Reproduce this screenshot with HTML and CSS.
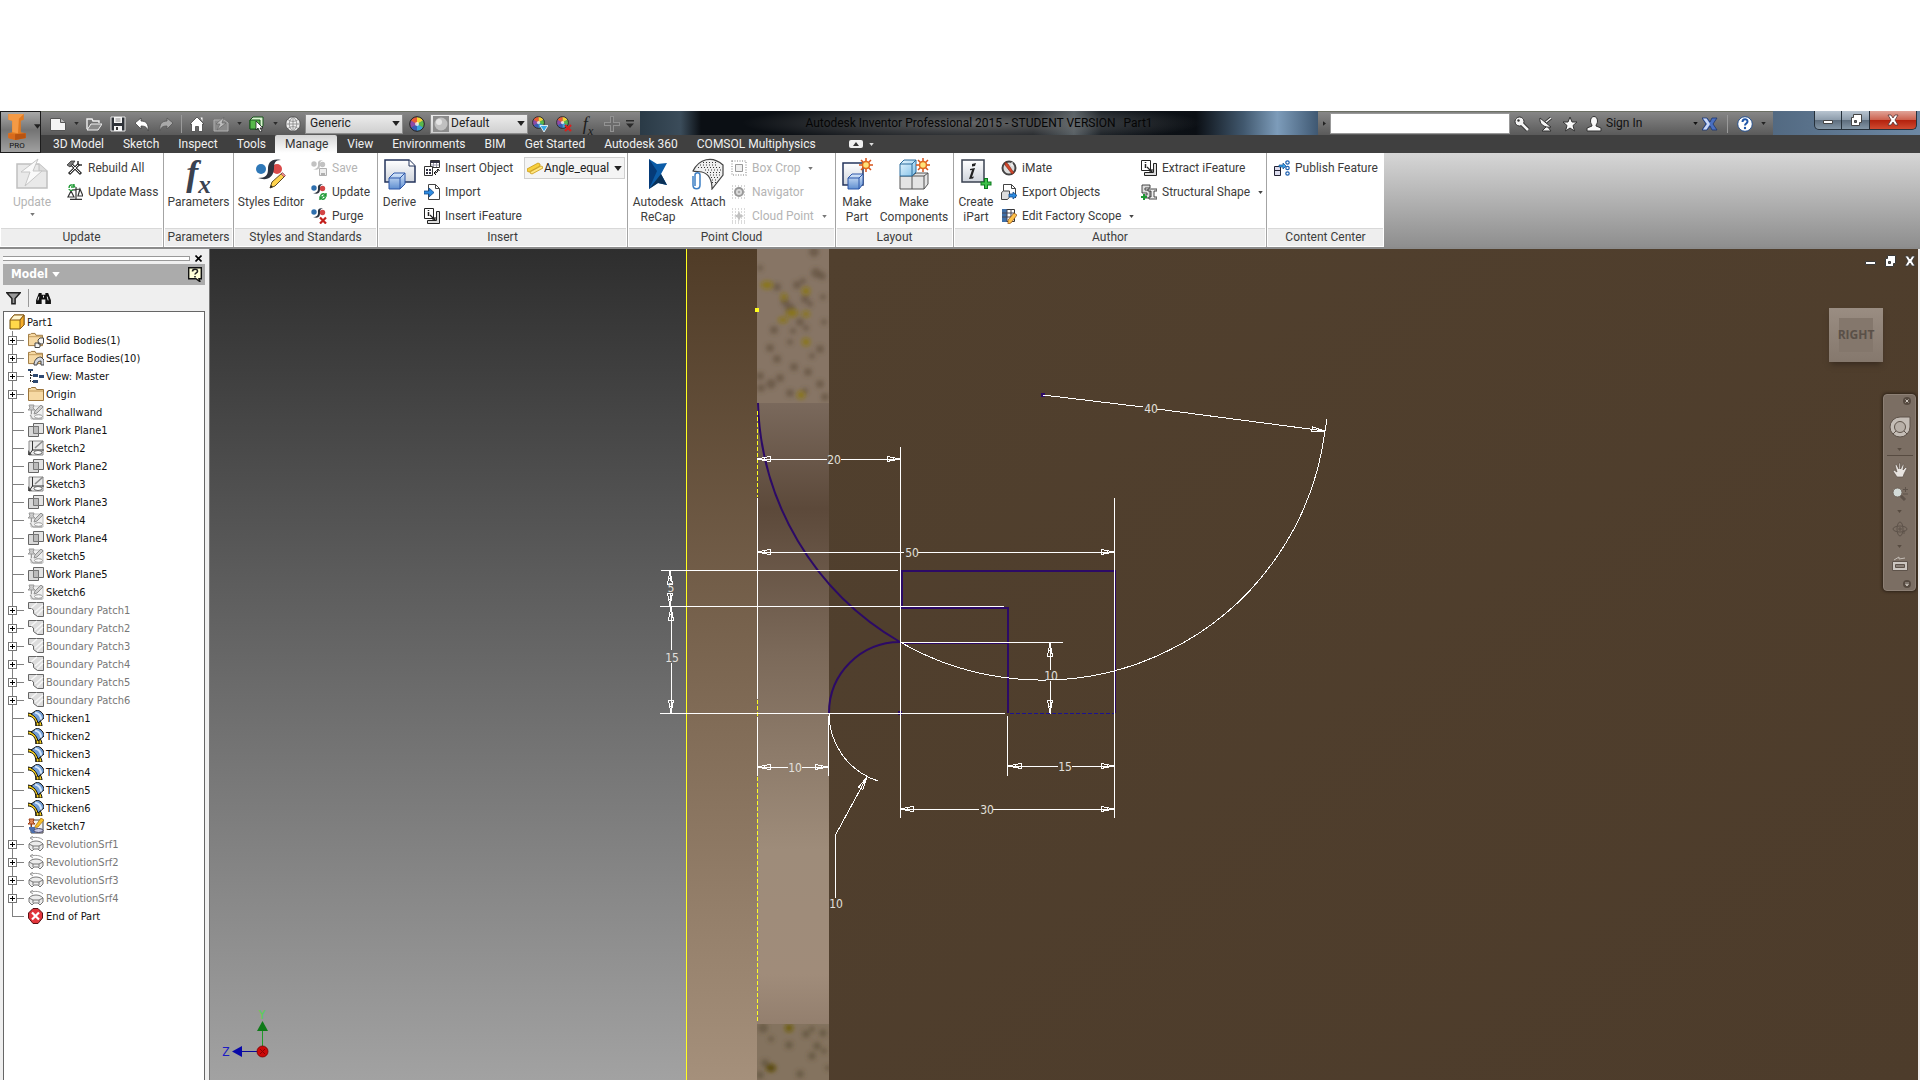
FILE: index.html
```html
<!DOCTYPE html>
<html lang="en">
<head>
<meta charset="utf-8">
<title>Autodesk Inventor Professional 2015 - STUDENT VERSION - Part1</title>
<link rel="stylesheet" href="styles.css">
</head>
<body>
<svg class="defs" aria-hidden="true">
  <defs>
    <linearGradient id="gBlue" x1="0" y1="0" x2="0" y2="1"><stop offset="0" stop-color="#d8e8fb"/><stop offset="1" stop-color="#5f8ed0"/></linearGradient>
    <linearGradient id="gPage" x1="0" y1="0" x2="0" y2="1"><stop offset="0" stop-color="#fff"/><stop offset="1" stop-color="#cfd4dc"/></linearGradient>
    <linearGradient id="gSky" x1="0" y1="0" x2="1" y2="1"><stop offset="0" stop-color="#eaf7ff"/><stop offset="1" stop-color="#7fc0e8"/></linearGradient>
    <symbol id="i-caret" viewBox="0 0 6 4"><path d="M0 0h6L3 4z" fill="currentColor"/></symbol>
    <symbol id="i-custom" viewBox="0 0 8 8"><path d="M0 0h8v1.500H0zM0 3.500h8L4 8z" fill="currentColor"/></symbol>
    <symbol id="i-new" viewBox="0 0 16 16"><path d="M.5 2.500h10l5 4v8H.5z" fill="#f4f4f4" stroke="#555"/><path d="M10.500 2.500v4h5" fill="#bbb" stroke="#555"/></symbol>
    <symbol id="i-open" viewBox="0 0 16 16"><path d="M1 13V3h5l1 2h6v2" fill="none" stroke="#f0f0f0" stroke-width="1.400"/><path d="M1 14l4-6h11l-4 6z" fill="#8a8a8a" stroke="#f0f0f0"/></symbol>
    <symbol id="i-save" viewBox="0 0 16 16"><path d="M1 1h14v14H1z" fill="#2e3238" stroke="#e8e8e8"/><path d="M4 1h8v6H4zM4 10h8v5H4z" fill="#f5f5f5"/><path d="M5.500 3h5M5.500 5h5" stroke="#888"/><path d="M6 11h2v3H6z" fill="#333"/></symbol>
    <symbol id="i-undo" viewBox="0 0 16 16"><path d="M1 7l6-5v3c5 0 8 3 7 10-1-4-3-5-7-5v3z" fill="#fff" stroke="#444" stroke-width=".8"/></symbol>
    <symbol id="i-redo" viewBox="0 0 16 16"><path d="M15 7L9 2v3C4 5 1 8 2 15c1-4 3-5 7-5v3z" fill="#a9a9a9" stroke="#555" stroke-width=".8"/></symbol>
    <symbol id="i-home" viewBox="0 0 16 16"><path d="M8 1l7 7h-1.500v7.500h-4v-5h-3v5h-4V8H1z" fill="#fff" stroke="#444" stroke-width=".8"/><path d="M11.500 1.500h2v4z" fill="#fff"/></symbol>
    <symbol id="i-updsm" viewBox="0 0 16 16"><path d="M1 4h10l4 3v8H1z" fill="#8a8a8a" stroke="#b0b0b0"/><path d="M11 1L3 8h4l-3 6 9-7H9z" fill="#bdbdbd" stroke="#666" stroke-width=".7"/></symbol>
    <symbol id="i-select" viewBox="0 0 16 16"><path d="M1 4l3-3h10v9l-3 3H1z" fill="#d9f5d0" stroke="#17551a"/><path d="M1 4h10v9H1z" fill="#57b94a" stroke="#17551a"/><path d="M7 5v9l2-2 2 4 2-1-2-3h3z" fill="#fff" stroke="#222" stroke-width=".8"/></symbol>
    <symbol id="i-globe" viewBox="0 0 16 16"><circle cx="8" cy="8" r="7.300" fill="#eee" stroke="#555"/><path d="M8 1v14M1 8h14M3 3.500c3 2.500 7 2.500 10 0M3 12.500c3-2.500 7-2.500 10 0M8 1C3 5 3 11 8 15M8 1c5 4 5 10 0 14" fill="none" stroke="#8c8c8c" stroke-width=".9"/></symbol>
    <symbol id="i-wheel" viewBox="0 0 16 16"><path d="M8 8V1a7 7 0 0 1 6.100 3.500z" fill="#f3d437"/><path d="M8 8l6.100-3.500a7 7 0 0 1 0 7z" fill="#59b84c"/><path d="M8 8l6.100 3.500A7 7 0 0 1 8 15z" fill="#3aa3d8"/><path d="M8 8v7a7 7 0 0 1-6.100-3.500z" fill="#3b5bb5"/><path d="M8 8l-6.100 3.500a7 7 0 0 1 0-7z" fill="#8e4aa6"/><path d="M8 8L1.900 4.500A7 7 0 0 1 8 1z" fill="#ea5a35"/><circle cx="8" cy="8" r="7.300" fill="none" stroke="#222"/><circle cx="8" cy="8" r="2" fill="#fff" opacity=".75"/></symbol>
    <symbol id="i-wheeldn" viewBox="0 0 16 16"><use href="#i-wheel" width="13" height="13"/><path d="M8 9.500h8L12 16z" fill="#39a9e8" stroke="#fff" stroke-width=".8"/></symbol>
    <symbol id="i-wheelx" viewBox="0 0 16 16"><use href="#i-wheel" width="13" height="13"/><path d="M9 9l6 6M15 9l-6 6" stroke="#d8201c" stroke-width="2.200"/></symbol>
    <symbol id="i-ball" viewBox="0 0 16 16"><path d="M0 0h16v16H0z" fill="#8c8c8c"/><circle cx="8" cy="8" r="6.500" fill="#c0c0c0"/><circle cx="6" cy="6" r="3" fill="#e4e4e4"/></symbol>
    <symbol id="i-plus" viewBox="0 0 16 16"><path d="M8 0v16M0 8h16" stroke="#929292" stroke-width="4"/><path d="M8 1v14M1 8h14" stroke="#6c6c6c" stroke-width="2"/></symbol>
    <symbol id="i-key" viewBox="0 0 16 16"><path d="M8 8l6 6" stroke="#333" stroke-width="4.500"/><circle cx="5.500" cy="5.500" r="4.500" fill="#f4f4f4" stroke="#333"/><path d="M7 7l7 7" stroke="#f4f4f4" stroke-width="2.600"/><circle cx="4.500" cy="4.500" r="1.200" fill="#333"/></symbol>
    <symbol id="i-dish" viewBox="0 0 16 16"><path d="M4 15h9l-4-5z" fill="#f4f4f4" stroke="#333"/><path d="M2 2c-1 6 4 10 11 9z" fill="#f4f4f4" stroke="#333"/><path d="M8 6l5-4" stroke="#333" stroke-width="3"/><path d="M8 6l5-4" stroke="#f4f4f4" stroke-width="1.500"/></symbol>
    <symbol id="i-star" viewBox="0 0 16 16"><path d="M8 1l2 5h5l-4 3.500 1.500 5.500L8 12l-4.500 3L5 9.500 1 6h5z" fill="#f8f8f8" stroke="#333"/></symbol>
    <symbol id="i-user" viewBox="0 0 16 16"><path d="M4.500 5c0-6 7-6 7 0 0 3-1.500 3-1.500 5l5 2v3H1v-3l5-2c0-2-1.500-2-1.500-5z" fill="#f8f8f8" stroke="#333"/></symbol>
    <symbol id="i-xchg" viewBox="0 0 16 16"><path d="M0 2h5l3 4 2-4h5l-4 6 4 6h-5l-2-4-3 4H0l4-6z" fill="#4a6fc0" stroke="#1c3670" stroke-width=".8"/><path d="M1 2.500h3.500L8 8l-3.500 5.500H1L5 8z" fill="#c9d8f6"/></symbol>
    <symbol id="i-help" viewBox="0 0 16 16"><circle cx="8" cy="8" r="7.300" fill="#fff" stroke="#27518e"/><path d="M5.500 6c0-3.500 5-3.500 5-.5 0 2-2.500 2-2.500 4" fill="none" stroke="#1f56a8" stroke-width="2"/><circle cx="8" cy="12" r="1.200" fill="#1f56a8"/></symbol>

    <symbol id="b-update" viewBox="0 0 32 32"><path d="M1 6h22l8 7v17H1z" fill="#e9e9e9" stroke="#c0c0c0" stroke-width="1.500"/><path d="M23 6v7h8" fill="#ddd" stroke="#c0c0c0"/><path d="M22 1L5 14h9L9 28l17-15h-9z" fill="#fafafa" stroke="#c6c6c6"/></symbol>
    <symbol id="b-styles" viewBox="0 0 32 32"><circle cx="6" cy="11" r="5" fill="#2f78b8"/><circle cx="22" cy="11" r="5" fill="#d94a4a"/><path d="M26 2C16 0 13 5 13 11c0 6-2 9-10 9 9 3 15 0 16-9 0-6 1-9 7-9z" fill="#2d3440"/><path d="M15 30l2-6 10-9 3 3-10 10z" fill="#ffd34d" stroke="#5d4a22"/><path d="M15 30l1-3 2 2z" fill="#222"/><path d="M26 16l3 3 1.500-1.500-3-3z" fill="#e88" stroke="#633" stroke-width=".5"/></symbol>
    <symbol id="b-derive" viewBox="0 0 32 32"><path d="M1 2h24l6 6v16H1z" fill="url(#gPage)" stroke="#24355c" stroke-width="1.500"/><path d="M25 2v6h6" fill="#fff" stroke="#24355c"/><path d="M5 20l5-5h11v11l-5 5H5z" fill="url(#gBlue)" stroke="#2c56a8"/><path d="M5 20h11v11M16 20l5-5" fill="none" stroke="#2c56a8"/></symbol>
    <symbol id="b-recap" viewBox="0 0 32 32"><path d="M7 1l8 5 10-1-6 11 6 11-9-2-9 6z" fill="#0b5ca8"/><path d="M7 1l8 12-8 18z" fill="#053a78"/><path d="M7 31l12-15 6 11-9-2z" fill="#0a3158"/></symbol>
    <symbol id="b-attach" viewBox="0 0 32 32"><path d="M1 13C7 1 20-3 31 7v10L20 31c0-9-3-15-10-17-3-1-7 0-9-1z" fill="#f0f0f0" stroke="#444" stroke-width="1.200"/><path d="M8 7h18M6 9.500h22M13 12h16M15 14.500h14M18 17h11M19 19.500h9M20 22h6M20 24.500h4M11 4.500h13" stroke="#333" stroke-dasharray="1 2"/><path d="M3 28V17c0-3 5-3 5 0v10c0 5-7 5-7 0V18" fill="none" stroke="#3d7fc4" stroke-width="1.500"/></symbol>
    <symbol id="s-burst" viewBox="0 0 14 14"><path d="M7 0v14M0 7h14M2 2l10 10M12 2L2 12" stroke="#d8541c" stroke-width="1.500"/><circle cx="7" cy="7" r="3.500" fill="#ffe27a" stroke="#e06a1c" stroke-width="1.500"/></symbol>
    <symbol id="b-part" viewBox="0 0 32 32"><path d="M2 5h20v22H2z" fill="url(#gPage)" stroke="#24355c" stroke-width="1.500"/><path d="M7 20l4-4h11v10l-4 5H7z" fill="url(#gBlue)" stroke="#2c56a8"/><path d="M7 20h11v11M18 20l4-4" fill="none" stroke="#2c56a8"/><use href="#s-burst" x="18" y="0" width="14" height="14"/></symbol>
    <symbol id="b-comp" viewBox="0 0 32 32"><path d="M2 18l4-3h24v11l-4 5H2z" fill="#e4e4e4" stroke="#555"/><path d="M2 18h24v13M14 18v13M26 18l4-3M14 18l4-3" fill="none" stroke="#555"/><path d="M2 6l4-4h12v12l-4 4H2z" fill="url(#gSky)" stroke="#2c6d9c"/><path d="M2 6h12v12M14 6l4-4" fill="none" stroke="#2c6d9c"/><use href="#s-burst" x="18" y="0" width="14" height="14"/></symbol>
    <symbol id="b-ipart" viewBox="0 0 32 32"><path d="M2 2h22v22H2z" fill="url(#gPage)" stroke="#3a4150" stroke-width="1.500"/><path d="M12 6l4-1-1 3-3 .5zM10 11l5-1-3 9 2-.5-1 2-4 .5 3-9-2 .3z" fill="#222"/><path d="M26 20v11M20.500 25.500h11" stroke="#0c7a1e" stroke-width="4"/><path d="M26 21v9M21.500 25.500h9" stroke="#3fc14a" stroke-width="2"/></symbol>

    <symbol id="m-rebuild" viewBox="0 0 16 16"><path d="M3 3l11 11M12 4L2 14" stroke="#333" stroke-width="3"/><path d="M4 4l9 9M11 5L3 13" stroke="#f2f2f2"/><path d="M0 5l4-4h4L5 5 3 7z" fill="#777" stroke="#222" stroke-width=".7"/><path d="M11 1v3l1 1h3" fill="none" stroke="#333" stroke-width="1.500"/></symbol>
    <symbol id="m-mass" viewBox="0 0 16 16"><path d="M9 3v12M3 15.300h12M5 6l8-1M4 7l-3 6h6zM13 5l-2 7h5z" fill="none" stroke="#333" stroke-width="1.200"/><path d="M2 4c0-4 5-4 6-1M7 0v3H4M6 6C4 7 2 6 2 5" fill="none" stroke="#1f9a35" stroke-width="1.300"/></symbol>
    <symbol id="s-style" viewBox="0 0 16 16"><circle cx="3" cy="4" r="2.700" fill="#2f6fae"/><circle cx="11.500" cy="4.500" r="2.700" fill="#d34545"/><path d="M12 0C6 0 7 3 7 5s-1 4-5 4c6 2 7-1 7-4 0-2 0-4 3-5z" fill="#2d3440"/></symbol>
    <symbol id="m-ssave" viewBox="0 0 16 16"><g fill="#c2c2c2"><circle cx="3" cy="4" r="2.700"/><circle cx="11.500" cy="4.500" r="2.700"/><path d="M12 0C6 0 7 3 7 5s-1 4-5 4c6 2 7-1 7-4 0-2 0-4 3-5z"/></g><path d="M8.500 8.500h7v7h-7z" fill="#eee" stroke="#b0b0b0"/><path d="M10 13h4v2h-4z" fill="#b0b0b0"/></symbol>
    <symbol id="m-supd" viewBox="0 0 16 16"><use href="#s-style" width="16" height="16"/><path d="M15 9v3h-3M9 16v-3h3M9.500 12c1-3 4-3 5-.5M14.500 13c-1 3-4 3-5 .5" fill="none" stroke="#1f9a35" stroke-width="1.400"/></symbol>
    <symbol id="m-spurge" viewBox="0 0 16 16"><use href="#s-style" width="16" height="16"/><path d="M9 9.500l6 6M15 9.500l-6 6" stroke="#c3201c" stroke-width="2.200"/></symbol>
    <symbol id="m-iobj" viewBox="0 0 16 16"><path d="M6.500.5h9v7h-9z" fill="#fff" stroke="#333"/><path d="M6 2h10" stroke="#334" stroke-width="2"/><path d="M9.500 3v4M12.500 3v4M7 5h8" stroke="#99a"/><path d="M.5 6.500h8v9h-8z" fill="#fff" stroke="#333"/><path d="M2 9h2v2H2zM5 9h2v2H5zM2 12h2v2H2zM5 12h2v2H5z" fill="#334"/><path d="M14 9c0 3-1 4-4 4M12 11l-2 2 2 2M12.500 11L14 9l1.500 2" fill="none" stroke="#111"/></symbol>
    <symbol id="m-import" viewBox="0 0 16 16"><path d="M4.500.5h7l4 4v11h-11z" fill="#fff" stroke="#444"/><path d="M11.500.5v4h4" fill="none" stroke="#444"/><path d="M0 7h5V4l5 4.500L5 13v-3H0z" fill="#2d8be0" stroke="#124a8c" stroke-width=".8"/></symbol>
    <symbol id="m-ifeat" viewBox="0 0 16 16"><path d="M12.500 3.500h3v12h-12v-3h9z" fill="#ddd" stroke="#222"/><path d="M.5.500h9v10h-9z" fill="#fff" stroke="#222"/><path d="M4.500 4v4M4.500 2v1" stroke="#222" stroke-width="1.500"/><path d="M6 7l5 5M11 9v3H8" fill="none" stroke="#222" stroke-width="1.200"/></symbol>
    <symbol id="m-angle" viewBox="0 0 16 16"><path d="M0 9L11 3l2 1v2L2 12l-2-1z" fill="#f7cf3d" stroke="#c99812" stroke-width=".8"/><path d="M3 12l11-6 2 1v1L5 14l-2-1z" fill="#ffe680" stroke="#c99812" stroke-width=".8"/></symbol>
    <symbol id="m-crop" viewBox="0 0 16 16"><path d="M1 1h14v14H1z" fill="none" stroke="#aaa" stroke-dasharray="1 1.500" stroke-width="1.500"/><path d="M4.500 4.500h7v7h-7z" fill="#f0f0f0" stroke="#999"/></symbol>
    <symbol id="m-navi" viewBox="0 0 16 16"><path d="M1 2h14M1 5h14M1 8h14M1 11h14M1 14h14" stroke="#aaa" stroke-dasharray="1 2"/><circle cx="8" cy="8" r="4" fill="#ddd" stroke="#999" stroke-width="2"/><circle cx="8" cy="8" r="1.300" fill="#aaa"/></symbol>
    <symbol id="m-cloud" viewBox="0 0 16 16"><path d="M1 1h14M1 4h14M1 7h14M1 10h14M1 13h14M1 15h14" stroke="#b5b5b5" stroke-dasharray="1 2"/><path d="M8 3l1.500 3.500L13 8 9.500 9.500 8 13 6.500 9.500 3 8l3.500-1.500z" fill="#c2c2c2"/></symbol>
    <symbol id="m-imate" viewBox="0 0 16 16"><circle cx="8" cy="8" r="6.500" fill="#ddd" stroke="#444" stroke-width="2"/><path d="M4 2l3 2 6 9-2 1-7-9z" fill="#d4472a" stroke="#7a2010" stroke-width=".6"/><path d="M11 2v4" stroke="#fff"/></symbol>
    <symbol id="m-export" viewBox="0 0 16 16"><path d="M2.500 7V.500h8l4 4V14" fill="#fff" stroke="#444"/><path d="M10.500.5v4h4" fill="none" stroke="#444"/><path d="M.5 8.500l2-1.500h6v6l-2 2.500h-6z" fill="#ddd" stroke="#444"/><path d="M8 10h4V8l4 3.500-4 3.500v-2H8z" fill="#2d8be0" stroke="#124a8c" stroke-width=".8"/></symbol>
    <symbol id="m-scope" viewBox="0 0 16 16"><path d="M1.500 1.500h12v12h-12z" fill="#fff" stroke="#333"/><path d="M1 1h5v13H1z" fill="#3e6fa8"/><path d="M1 5h12M1 9h12M6 1v13M10 1v12" stroke="#445"/><path d="M7 12l6-7 3 2-6 8-3 1z" fill="#ffc24a" stroke="#8a4a12" stroke-width=".7"/></symbol>
    <symbol id="m-struct" viewBox="0 0 16 16"><path d="M1 1h8v3H4v2h5v8H3v-3h3V9H1z" fill="#ddd" stroke="#333" stroke-width=".9"/><path d="M7 5h9v2h-3v6h3v2H8v-2h2V7H7z" fill="#eee" stroke="#333" stroke-width=".9"/><path d="M3 10v6M0 13h6" stroke="#1f9a35" stroke-width="2"/></symbol>
    <symbol id="m-publish" viewBox="0 0 16 16"><path d="M.5 6.500h6v9h-6zM.5 10.500h6" fill="#dde" stroke="#223"/><path d="M5 5h4V3l3 3-3 3V7H5z" fill="#3aa0e6" stroke="#124a8c" stroke-width=".7"/><g fill="#fff" stroke="#1b5fb0" stroke-width="1.200"><circle cx="13.500" cy="2.500" r="1.700"/><circle cx="13.500" cy="8" r="1.700"/><circle cx="13.500" cy="13.500" r="1.700"/></g></symbol>

    <symbol id="t-part" viewBox="0 0 16 16"><path d="M1 6l4-5h10v10l-4 4H1z" fill="#ffd84a" stroke="#6b4a08"/><path d="M1 6l4-5h10l-4 5z" fill="#fff6cf" stroke="#8a5a14"/><path d="M11 6v9l4-4V1z" fill="#f5ae2a" stroke="#8a5a14"/></symbol>
    <symbol id="t-folder" viewBox="0 0 16 16"><path d="M.5 14.500v-12h2l1-1h4l1 2h7v11z" fill="#f6d9a4" stroke="#9a733a"/><path d="M1 5h14" stroke="#c29a5a"/></symbol>
    <symbol id="t-solid" viewBox="0 0 16 16"><use href="#t-folder" width="15" height="15"/><path d="M10 8l2-2h3.500v5l-1 1h-4zM7 11h5v4l-1 .5H7z" fill="#f4f4f4" stroke="#444"/></symbol>
    <symbol id="t-surf" viewBox="0 0 16 16"><use href="#t-folder" width="15" height="15"/><path d="M6 15c0-5 3-8 7-8l3 3v5h-3v-4c-3 0-4 2-4 4z" fill="#d4d8e0" stroke="#444"/></symbol>
    <symbol id="t-view" viewBox="0 0 16 16"><path d="M2.500 3v10.500H6M2.500 7.500H5" fill="none" stroke="#222" stroke-dasharray="2 1"/><path d="M0 1h5v2H0zM5 6h5v3H5zM11 7h5v3h-5zM5 12h5v3H5z" fill="#2f4a72"/></symbol>
    <symbol id="t-plane" viewBox="0 0 16 16"><path d="M5.500 1.500h10v10h-10z" fill="#e4e4e4" stroke="#666"/><path d="M.5 4.500h10v10H.5z" fill="#d0d0d0" fill-opacity=".8" stroke="#666"/><path d="M5.500 4.500h5v7h-5z" fill="#bbb" stroke="#777"/></symbol>
    <symbol id="t-sketch" viewBox="0 0 16 16"><path d="M1 1h14v14H1z" fill="#eaeaea" stroke="#8a8a8a"/><path d="M0 10l4 5H0z" fill="#555"/><path d="M4.500 1v9L1 15M4 10h12" fill="none" stroke="#333"/><path d="M15 1L7 8" stroke="#888" stroke-width="1.500"/><ellipse cx="10" cy="12.500" rx="4" ry="2" fill="#fff" stroke="#666"/></symbol>
    <symbol id="t-gsketch" viewBox="0 0 16 16"><path d="M3 2h12v13H3z" fill="#eee" stroke="#c0c0c0"/><path d="M1 1h5L5 4l2 2H0l2-2zM3.500 6v4" fill="#ccc" stroke="#999"/><path d="M13 1l2 2-6 6-3 1 1-3z" fill="#d0d0d0" stroke="#909090"/><path d="M2 11l3 4h9" fill="none" stroke="#999"/><ellipse cx="10.500" cy="12.500" rx="4" ry="1.800" fill="#fafafa" stroke="#999"/></symbol>
    <symbol id="t-csketch" viewBox="0 0 16 16"><path d="M3 2h12v13H3z" fill="#f2f2f2" stroke="#444"/><path d="M1 1h5L5 4l2 2H0l2-2zM3.500 6v4" fill="#e08a5a" stroke="#9a3a14"/><path d="M13 0l3 2-6 7-4 1 2-3z" fill="#f6c02a" stroke="#a06a10" stroke-width=".7"/><path d="M1 11l3 4h3V9H1z" fill="#4a6fae"/><ellipse cx="10.500" cy="12.500" rx="4.500" ry="2" fill="#c8cbe6" stroke="#446"/></symbol>
    <symbol id="t-patch" viewBox="0 0 16 16"><path d="M.5.500h15v14h-6l-4-3V8l-2-1.500h-3z" fill="#dcdcdc" stroke="#666"/><path d="M3 6l6-5M7 10l8-7M9 13l6-6" stroke="#f6f6f6" stroke-width="1.500"/></symbol>
    <symbol id="t-thick" viewBox="0 0 16 16"><path d="M0 6c5 0 8 4 8 10h6C14 11 8 4 0 3z" fill="#f7d01c" stroke="#111"/><path d="M8 12v4M11 11v5" stroke="#111"/><path d="M3 4l6-4c4 1 7 4 7 8l-6 5C9 9 7 6 3 4z" fill="#6f9cd6" stroke="#111"/><path d="M7 2.500c4 1 6 4 6 7" fill="none" stroke="#d6e6fa" stroke-width="2"/></symbol>
    <symbol id="t-rev" viewBox="0 0 16 16"><path d="M1 8c3-4 11-4 14 0v4l-3 3-2-2H6l-2 2-3-3z" fill="#ececec" stroke="#777"/><path d="M1 8l4 2h6l4-2M5 10v3M11 10v3" fill="none" stroke="#777"/><path d="M15 4c-3-3-8-3-12-2M5 0L2 2l3 2" fill="none" stroke="#999"/></symbol>
    <symbol id="t-end" viewBox="0 0 16 16"><path d="M5 .5h5l4.500 4.500v5L10 15.500H5L.5 10V5z" fill="#e2343a" stroke="#5a1014"/><path d="M4 4.500l7 7M11 4.500l-7 7" stroke="#fff" stroke-width="2.200"/></symbol>
  </defs>
</svg>

<header class="chrome">
  <button class="app-menu" aria-label="Application menu">
    <svg class="app-logo" viewBox="0 0 20 28"><path d="M1 1h16v6l-3 1v12l5 1v5L8 28l-7-2v-5l4-1V8L1 7z" fill="#e07a22"/><path d="M1 1h16l-5 5-1 15-6-1V8L1 7z" fill="#f59a45"/><path d="M1 21l7 1 11-1v5L8 28l-7-2z" fill="#d86a1c"/><path d="M8 22l11-1v5L8 28z" fill="#b85412"/></svg>
    <svg class="caret caret-lg"><use href="#i-caret"/></svg>
    <span class="app-pro">PRO</span>
  </button>

  <div class="titlebar">
    <div class="qat">
      <button aria-label="New"><svg><use href="#i-new"/></svg></button><button class="drop" aria-label="New options"><svg class="caret"><use href="#i-caret"/></svg></button>
      <button aria-label="Open"><svg><use href="#i-open"/></svg></button>
      <button aria-label="Save"><svg><use href="#i-save"/></svg></button>
      <button aria-label="Undo"><svg><use href="#i-undo"/></svg></button>
      <button aria-label="Redo"><svg><use href="#i-redo"/></svg></button>
      <span class="bar-sep"></span>
      <button aria-label="Home"><svg><use href="#i-home"/></svg></button>
      <button aria-label="Update"><svg><use href="#i-updsm"/></svg></button><button class="drop" aria-label="Update options"><svg class="caret"><use href="#i-caret"/></svg></button>
      <button aria-label="Select"><svg><use href="#i-select"/></svg></button><button class="drop" aria-label="Select options"><svg class="caret"><use href="#i-caret"/></svg></button>
      <button aria-label="Material"><svg><use href="#i-globe"/></svg></button>
      <span class="combo"><select aria-label="Material"><option>Generic</option></select><svg class="caret caret-lg"><use href="#i-caret"/></svg></span>
      <button class="wide" aria-label="Appearance"><svg><use href="#i-wheel"/></svg></button>
      <span class="combo"><svg><use href="#i-ball"/></svg><select aria-label="Appearance"><option>Default</option></select><svg class="caret caret-lg"><use href="#i-caret"/></svg></span>
      <button aria-label="Adjust"><svg><use href="#i-wheeldn"/></svg></button>
      <button aria-label="Clear"><svg><use href="#i-wheelx"/></svg></button>
      <button class="fx-sm" aria-label="Parameters"><i>f<sub>x</sub></i></button>
      <button aria-label="Add"><svg><use href="#i-plus"/></svg></button>
      <button class="drop" aria-label="Customize"><svg class="custom"><use href="#i-custom"/></svg></button>
    </div>
    <h1 class="title"><span>Autodesk Inventor Professional 2015 - STUDENT VERSION</span><span>Part1</span></h1>
    <div class="infocenter">
      <button class="drop" aria-label="Collapse search"><svg class="caret turn"><use href="#i-caret"/></svg></button>
      <input type="text" aria-label="Search">
      <button aria-label="Search key"><svg><use href="#i-key"/></svg></button>
      <button aria-label="Communication"><svg><use href="#i-dish"/></svg></button>
      <button aria-label="Favorites"><svg><use href="#i-star"/></svg></button>
      <button class="signin"><svg><use href="#i-user"/></svg>Sign In<svg class="caret"><use href="#i-caret"/></svg></button>
      <button aria-label="Exchange"><svg><use href="#i-xchg"/></svg></button>
      <span class="bar-sep"></span>
      <button aria-label="Help"><svg><use href="#i-help"/></svg></button>
      <button class="drop" aria-label="Help options"><svg class="caret"><use href="#i-caret"/></svg></button>
    </div>
    <div class="winctl">
      <button aria-label="Minimize"><svg viewBox="0 0 12 12"><path d="M1.500 6.500h9v3h-9z" fill="#fff" stroke="#444"/></svg></button>
      <button aria-label="Restore"><svg viewBox="0 0 12 12"><path d="M3.500.5h8v8h-2v3h-8v-8h2z" fill="#fff" stroke="#444"/><path d="M4.500 6.500h2v2h-2z" fill="#666" stroke="#444"/></svg></button>
      <button class="close" aria-label="Close"><svg viewBox="0 0 12 12"><path d="M1 1h3l2 3 2-3h3L8 6l3 5H8L6 8l-2 3H1l3-5z" fill="#fff" stroke="#533" stroke-width=".8"/></svg></button>
    </div>
  </div>

  <nav class="tabs">
    <a href="#model">3D Model</a><a href="#sketch">Sketch</a><a href="#inspect">Inspect</a><a href="#tools">Tools</a><a href="#manage" class="active">Manage</a><a href="#view">View</a><a href="#env">Environments</a><a href="#bim">BIM</a><a href="#start">Get Started</a><a href="#a360">Autodesk 360</a><a href="#comsol">COMSOL Multiphysics</a>
    <button class="minimize" aria-label="Minimize ribbon"><svg viewBox="0 0 14 8"><rect width="14" height="8" rx="2" fill="#f0f0f0"/><path d="M4 6l3-4 3 4z" fill="#333"/></svg><svg class="caret"><use href="#i-caret"/></svg></button>
  </nav>
</header>

<section class="ribbon" id="manage">
  <div class="panel p-update">
    <div class="tools">
      <button class="big off"><svg><use href="#b-update"/></svg>Update<svg class="caret"><use href="#i-caret"/></svg></button>
      <div class="stack">
        <button><svg><use href="#m-rebuild"/></svg>Rebuild All</button>
        <button><svg><use href="#m-mass"/></svg>Update Mass</button>
      </div>
    </div>
    <h2>Update</h2>
  </div>
  <div class="panel p-param">
    <div class="tools"><button class="big"><span class="fx-big"><i>f<sub>x</sub></i></span>Parameters</button></div>
    <h2>Parameters</h2>
  </div>
  <div class="panel p-styles">
    <div class="tools">
      <button class="big"><svg><use href="#b-styles"/></svg>Styles Editor</button>
      <div class="stack">
        <button class="off"><svg><use href="#m-ssave"/></svg>Save</button>
        <button><svg><use href="#m-supd"/></svg>Update</button>
        <button><svg><use href="#m-spurge"/></svg>Purge</button>
      </div>
    </div>
    <h2>Styles and Standards</h2>
  </div>
  <div class="panel p-insert">
    <div class="tools">
      <button class="big"><svg><use href="#b-derive"/></svg>Derive</button>
      <div class="stack">
        <button><svg><use href="#m-iobj"/></svg>Insert Object</button>
        <button><svg><use href="#m-import"/></svg>Import</button>
        <button><svg><use href="#m-ifeat"/></svg>Insert iFeature</button>
      </div>
      <span class="combo flat"><svg><use href="#m-angle"/></svg><select aria-label="iFeature"><option>Angle_equal</option></select><svg class="caret caret-lg"><use href="#i-caret"/></svg></span>
    </div>
    <h2>Insert</h2>
  </div>
  <div class="panel p-cloud">
    <div class="tools">
      <button class="big"><svg><use href="#b-recap"/></svg>Autodesk<br>ReCap</button>
      <button class="big"><svg><use href="#b-attach"/></svg>Attach</button>
      <div class="stack">
        <button class="off"><svg><use href="#m-crop"/></svg>Box Crop<svg class="caret"><use href="#i-caret"/></svg></button>
        <button class="off"><svg><use href="#m-navi"/></svg>Navigator</button>
        <button class="off"><svg><use href="#m-cloud"/></svg>Cloud Point<svg class="caret"><use href="#i-caret"/></svg></button>
      </div>
    </div>
    <h2>Point Cloud</h2>
  </div>
  <div class="panel p-layout">
    <div class="tools">
      <button class="big"><svg><use href="#b-part"/></svg>Make<br>Part</button>
      <button class="big"><svg><use href="#b-comp"/></svg>Make<br>Components</button>
    </div>
    <h2>Layout</h2>
  </div>
  <div class="panel p-author">
    <div class="tools">
      <button class="big"><svg><use href="#b-ipart"/></svg>Create<br>iPart</button>
      <div class="stack">
        <button><svg><use href="#m-imate"/></svg>iMate</button>
        <button><svg><use href="#m-export"/></svg>Export Objects</button>
        <button><svg><use href="#m-scope"/></svg>Edit Factory Scope<svg class="caret"><use href="#i-caret"/></svg></button>
      </div>
      <div class="stack">
        <button><svg><use href="#m-ifeat"/></svg>Extract iFeature</button>
        <button><svg><use href="#m-struct"/></svg>Structural Shape<svg class="caret"><use href="#i-caret"/></svg></button>
      </div>
    </div>
    <h2>Author</h2>
  </div>
  <div class="panel p-content">
    <div class="tools"><div class="stack"><button><svg><use href="#m-publish"/></svg>Publish Feature</button></div></div>
    <h2>Content Center</h2>
  </div>
</section>

<main class="workspace">
  <aside class="browser">
    <div class="grip"><span></span><button aria-label="Close browser"><svg viewBox="0 0 7 7"><path d="M.5.500l6 6M6.500.5l-6 6" stroke="#000" stroke-width="1.600"/></svg></button></div>
    <div class="browser-head"><button class="browser-title">Model<svg class="caret caret-lg"><use href="#i-caret"/></svg></button>
      <button class="note" aria-label="Help"><svg viewBox="0 0 14 15"><path d="M.7.700h12.600v11H11l1 3-4-3H.7z" fill="#ffffd8" stroke="#111" stroke-width="1.400"/><path d="M4.500 4.500c0-3 5-3 5-.3 0 1.600-2.500 1.600-2.500 3.300" fill="none" stroke="#222" stroke-width="1.600"/><path d="M6.200 9h1.600v1.500H6.200z" fill="#222"/></svg></button></div>
    <div class="browser-tools">
      <button aria-label="Filter"><svg viewBox="0 0 14 12"><path d="M.7.700h12.600L8.500 6v5h-3V6z" fill="#999" stroke="#222" stroke-width="1.400"/></svg></button>
      <span></span>
      <button aria-label="Find"><svg viewBox="0 0 16 14"><path d="M3 1h3v2h4V1h3l3 8v4h-6V8H6v5H0V9z" fill="#111"/><path d="M3 5l-1 4M12 5l1 4M8 4v2" stroke="#fff"/></svg></button>
    </div>
    <ul class="tree">
      <li class="root"><svg><use href="#t-part"/></svg>Part1</li>
      <li><span class="node"><button aria-label="Expand"></button></span><svg><use href="#t-solid"/></svg>Solid Bodies(1)</li>
      <li><span class="node"><button aria-label="Expand"></button></span><svg><use href="#t-surf"/></svg>Surface Bodies(10)</li>
      <li><span class="node"><button aria-label="Expand"></button></span><svg><use href="#t-view"/></svg>View: Master</li>
      <li><span class="node"><button aria-label="Expand"></button></span><svg><use href="#t-folder"/></svg>Origin</li>
      <li><span class="node"></span><svg><use href="#t-gsketch"/></svg>Schallwand</li>
      <li><span class="node"></span><svg><use href="#t-plane"/></svg>Work Plane1</li>
      <li><span class="node"></span><svg><use href="#t-sketch"/></svg>Sketch2</li>
      <li><span class="node"></span><svg><use href="#t-plane"/></svg>Work Plane2</li>
      <li><span class="node"></span><svg><use href="#t-sketch"/></svg>Sketch3</li>
      <li><span class="node"></span><svg><use href="#t-plane"/></svg>Work Plane3</li>
      <li><span class="node"></span><svg><use href="#t-gsketch"/></svg>Sketch4</li>
      <li><span class="node"></span><svg><use href="#t-plane"/></svg>Work Plane4</li>
      <li><span class="node"></span><svg><use href="#t-gsketch"/></svg>Sketch5</li>
      <li><span class="node"></span><svg><use href="#t-plane"/></svg>Work Plane5</li>
      <li><span class="node"></span><svg><use href="#t-gsketch"/></svg>Sketch6</li>
      <li class="dim"><span class="node"><button aria-label="Expand"></button></span><svg><use href="#t-patch"/></svg>Boundary Patch1</li>
      <li class="dim"><span class="node"><button aria-label="Expand"></button></span><svg><use href="#t-patch"/></svg>Boundary Patch2</li>
      <li class="dim"><span class="node"><button aria-label="Expand"></button></span><svg><use href="#t-patch"/></svg>Boundary Patch3</li>
      <li class="dim"><span class="node"><button aria-label="Expand"></button></span><svg><use href="#t-patch"/></svg>Boundary Patch4</li>
      <li class="dim"><span class="node"><button aria-label="Expand"></button></span><svg><use href="#t-patch"/></svg>Boundary Patch5</li>
      <li class="dim"><span class="node"><button aria-label="Expand"></button></span><svg><use href="#t-patch"/></svg>Boundary Patch6</li>
      <li><span class="node"></span><svg><use href="#t-thick"/></svg>Thicken1</li>
      <li><span class="node"></span><svg><use href="#t-thick"/></svg>Thicken2</li>
      <li><span class="node"></span><svg><use href="#t-thick"/></svg>Thicken3</li>
      <li><span class="node"></span><svg><use href="#t-thick"/></svg>Thicken4</li>
      <li><span class="node"></span><svg><use href="#t-thick"/></svg>Thicken5</li>
      <li><span class="node"></span><svg><use href="#t-thick"/></svg>Thicken6</li>
      <li><span class="node"></span><svg><use href="#t-csketch"/></svg>Sketch7</li>
      <li class="dim"><span class="node"><button aria-label="Expand"></button></span><svg><use href="#t-rev"/></svg>RevolutionSrf1</li>
      <li class="dim"><span class="node"><button aria-label="Expand"></button></span><svg><use href="#t-rev"/></svg>RevolutionSrf2</li>
      <li class="dim"><span class="node"><button aria-label="Expand"></button></span><svg><use href="#t-rev"/></svg>RevolutionSrf3</li>
      <li class="dim"><span class="node"><button aria-label="Expand"></button></span><svg><use href="#t-rev"/></svg>RevolutionSrf4</li>
      <li><span class="node"></span><svg><use href="#t-end"/></svg>End of Part</li>
    </ul>
  </aside>

  <section class="viewport" aria-label="Sketch canvas">
    <svg class="scene" viewBox="210 249 1708 831" preserveAspectRatio="xMinYMin slice">
      <defs>
        <linearGradient id="gBack" x1="0" y1="0" x2="0" y2="1"><stop offset="0" stop-color="#2e2e2e"/><stop offset="1" stop-color="#a2a2a2"/></linearGradient>
        <linearGradient id="gWall" x1="0" y1="0" x2="0" y2="1"><stop offset="0" stop-color="#503c27"/><stop offset=".5" stop-color="#7b6651"/><stop offset="1" stop-color="#a5907b"/></linearGradient>
        <linearGradient id="gBand" x1="0" y1="0" x2="0" y2="1"><stop offset="0" stop-color="#7a695c"/><stop offset=".17" stop-color="#5c493a"/><stop offset=".4" stop-color="#7b6959"/><stop offset=".72" stop-color="#9e8c7a"/><stop offset=".92" stop-color="#a08c7a"/><stop offset="1" stop-color="#937f6e"/></linearGradient>
        <linearGradient id="gFace" x1="0" y1="0" x2="1" y2="1"><stop offset="0" stop-color="#51402e"/><stop offset="1" stop-color="#4d3c2b"/></linearGradient>
        <filter id="soft" x="-20%" y="-20%" width="140%" height="140%"><feGaussianBlur stdDeviation="2"/></filter>
        <clipPath id="cTop"><path d="M757 249h72v154h-72z"/></clipPath>
        <clipPath id="cBot"><path d="M757 1024h72v56h-72z"/></clipPath>
        <path id="arrow" d="M0 0L-13-2.500V2.500ZM-7-2V2" fill="none" stroke="#fff"/>
      </defs>
      <path d="M210 249h477v831H210z" fill="url(#gBack)"/>
      <path d="M687 249h70v831h-70z" fill="url(#gWall)"/>
      <path d="M829 249h1089v831H829z" fill="url(#gFace)"/>
      <path d="M757 249h72v154h-72z" fill="#877565"/>
      <path d="M757 403h72v621h-72z" fill="url(#gBand)"/>
      <path d="M757 1024h72v56h-72z" fill="#84735f"/>
      <g clip-path="url(#cTop)">
        <g filter="url(#soft)" fill="#5a4836" fill-opacity=".55">
          <circle cx="814" cy="252" r="5"/><circle cx="760" cy="268" r="3"/><circle cx="816" cy="273" r="5"/><circle cx="822" cy="276" r="4"/><circle cx="797" cy="285" r="4"/><circle cx="803" cy="281" r="3"/><circle cx="777" cy="287" r="4"/><circle cx="785" cy="302" r="4"/><circle cx="790" cy="308" r="5"/><circle cx="805" cy="299" r="4"/><circle cx="810" cy="304" r="3"/><circle cx="800" cy="322" r="4"/><circle cx="774" cy="330" r="4"/><circle cx="793" cy="331" r="3"/><circle cx="806" cy="328" r="3"/><circle cx="823" cy="297" r="3"/><circle cx="824" cy="322" r="3"/><circle cx="770" cy="348" r="4"/><circle cx="790" cy="342" r="3"/><circle cx="820" cy="349" r="4"/><circle cx="812" cy="356" r="3"/><circle cx="777" cy="359" r="4"/><circle cx="794" cy="367" r="4"/><circle cx="808" cy="372" r="4"/><circle cx="760" cy="376" r="4"/><circle cx="780" cy="378" r="4"/><circle cx="771" cy="384" r="5"/><circle cx="820" cy="384" r="4"/><circle cx="790" cy="393" r="4"/><circle cx="825" cy="397" r="4"/><circle cx="761" cy="388" r="4"/><circle cx="805" cy="391" r="3"/>
        </g>
        <g filter="url(#soft)" fill="#8a7510" fill-opacity=".85"><ellipse cx="767" cy="285" rx="6" ry="4"/><ellipse cx="784" cy="297" rx="3" ry="4"/><circle cx="806" cy="291" r="4"/><ellipse cx="792" cy="313" rx="6" ry="4"/><ellipse cx="806" cy="314" rx="4" ry="3"/><ellipse cx="783" cy="320" rx="5" ry="3"/><circle cx="806" cy="342" r="4"/><circle cx="801" cy="395" r="4"/></g>
      </g>
      <g clip-path="url(#cBot)"><g filter="url(#soft)">
        <g fill="#54452f" fill-opacity=".5"><circle cx="763" cy="1028" r="5"/><circle cx="771" cy="1039" r="3"/><circle cx="789" cy="1045" r="4"/><circle cx="806" cy="1034" r="4"/><circle cx="812" cy="1029" r="3"/><circle cx="823" cy="1033" r="4"/><circle cx="817" cy="1046" r="4"/><circle cx="824" cy="1051" r="3"/><circle cx="812" cy="1056" r="4"/><circle cx="800" cy="1074" r="4"/><circle cx="765" cy="1063" r="4"/><circle cx="760" cy="1075" r="4"/><circle cx="828" cy="1068" r="3"/></g>
        <circle cx="789" cy="1028" r="4" fill="#6e5e10"/><ellipse cx="771" cy="1068" rx="5" ry="4" fill="#5c4c08"/>
      </g></g>
      <g fill="none" stroke="#2c0a66" stroke-width="2">
        <path d="M758 403A285 285 0 0 0 900 642M829 713a71 71 0 0 1 71-71"/>
      </g>
      <g shape-rendering="crispEdges">
        <path d="M686.500 249v831" stroke="#ffff1e"/>
        <path d="M757.500 411v86M757.500 700v16M757.500 777v245" stroke="#ffff1e" stroke-dasharray="4 2"/>
        <path d="M755 308h4v4h-4z" fill="#ffff1e"/>
        <g fill="none" stroke="#2c0a66" stroke-width="2">
          <path d="M901 571h214v142M902 570v38h106v105M901 643h107"/>
          <path d="M898 713h4M1041 395h4" stroke-width="4"/>
        </g>
        <path d="M1010 713.500h104" stroke="#1c1290" stroke-dasharray="4 2"/>
        <g fill="none" stroke="#fff">
          <path d="M757.500 498v201M757.500 717v59M900.500 447v371M1114.500 498v320M828.500 716v60M1007.500 716v60"/>
          <path d="M661 570.500h237M660 606.500h344M660 713.500h345M901 642.500h162"/>
          <path d="M757 459.500h70M841 459.500h59M757 552.500h147M918 552.500h196M671.500 607v43M671.500 663v50M670.500 571v10M670.500 593v13"/>
          <path d="M1050.500 642v28M1050.500 681v33M757 767.500h31M802 767.500h26M1008 766.500h50M1072 766.500h42M900 809.500h79M993 809.500h121"/>
          <path d="M900 642A285 285 0 0 0 1325 431L1327 419M829 713a71 71 0 0 0 49 68M1043 395l100 12M1157 409l168 22M867 777l-31.500 58v63"/>
          <use href="#arrow" transform="translate(757 459) rotate(180)"/><use href="#arrow" transform="translate(900 459)"/>
          <use href="#arrow" transform="translate(757 552) rotate(180)"/><use href="#arrow" transform="translate(1114 552)"/>
          <use href="#arrow" transform="translate(670 571) rotate(-90)"/><use href="#arrow" transform="translate(670 606) rotate(90)"/>
          <use href="#arrow" transform="translate(671 607) rotate(-90)"/><use href="#arrow" transform="translate(671 713) rotate(90)"/>
          <use href="#arrow" transform="translate(1050 643) rotate(-90)"/><use href="#arrow" transform="translate(1050 713) rotate(90)"/>
          <use href="#arrow" transform="translate(757 767) rotate(180)"/><use href="#arrow" transform="translate(828 767)"/>
          <use href="#arrow" transform="translate(1008 766) rotate(180)"/><use href="#arrow" transform="translate(1114 766)"/>
          <use href="#arrow" transform="translate(900 809) rotate(180)"/><use href="#arrow" transform="translate(1114 809)"/>
          <use href="#arrow" transform="translate(1325 431) rotate(7)"/><use href="#arrow" transform="translate(867 777) rotate(-61)"/>
        </g>
      </g>
      <g class="dims">
        <text x="834" y="464">20</text><text x="912" y="557">50</text><text x="671" y="592">5</text><text x="672" y="662">15</text>
        <text x="1051" y="680">10</text><text x="795" y="772">10</text><text x="1065" y="771">15</text><text x="987" y="814">30</text>
        <text x="1151" y="413">40</text><text x="836" y="908">10</text>
      </g>
      <path d="M262.500 1046v-16" stroke="#1f9a2a"/><path d="M257 1031l5.500-10 5.500 10z" fill="#0f7a18"/>
      <path d="M257 1051.500h-15" stroke="#0a0a9a"/><path d="M242 1046v11l-10-5.500z" fill="#0808a8"/>
      <circle cx="262.500" cy="1051.500" r="5.500" fill="#cc0808" stroke="#700" stroke-width=".8"/><path d="M260 1049l5 5M265 1049l-5 5" stroke="#8a0000"/>
      <g class="axis"><text x="262" y="1019" fill="#4fd64f">Y</text><text x="226" y="1056" fill="#1c1cc4">Z</text></g>
    </svg>

    <div class="docctl">
      <button aria-label="Minimize document"><svg viewBox="0 0 12 12"><path d="M1.500 6.500h10v3h-10z" fill="#fff" stroke="#3a3a3a"/></svg></button>
      <button aria-label="Restore document"><svg viewBox="0 0 12 12"><path d="M3.500.5h8v8h-2v3h-8v-8h2z" fill="#fff" stroke="#3a3a3a"/><path d="M4.500 6.500h2v2h-2z" fill="#666" stroke="#3a3a3a"/></svg></button>
      <button aria-label="Close document"><svg viewBox="0 0 12 12"><path d="M1 1h3l2 3 2-3h3L8 6l3 5H8L6 8l-2 3H1l3-5z" fill="#fff" stroke="#3a3a3a" stroke-width=".8"/></svg></button>
    </div>
    <button class="viewcube"><span>RIGHT</span></button>
    <div class="navbar">
      <button class="edge" aria-label="Close navigation bar"><svg viewBox="0 0 8 8"><circle cx="4" cy="4" r="4" fill="#55493f"/><path d="M2.500 2.500l3 3M5.500 2.500l-3 3" stroke="#cfc8c0"/></svg></button>
      <button class="nav-wheel" aria-label="Steering wheel"><svg viewBox="0 0 22 22"><path d="M11 1h10v10a10 10 0 1 1-10-10z" fill="#c4bdb6" stroke="#5e534a"/><circle cx="11" cy="11" r="5.500" fill="#b8b0a8" stroke="#5e534a"/><path d="M4 18l3-3M18 18l-3-3" stroke="#5e534a"/></svg></button>
      <svg class="caret"><use href="#i-caret"/></svg>
      <hr>
      <button aria-label="Pan"><svg viewBox="0 0 16 16"><path d="M5 15L1 9l1-1 3 2L3 3l1.500-.5L7 7V1h1.500v6L11 2l1 .5L11 8l3-3 1 1-3 6-1 3z" fill="#e8e4e0" stroke="#5e534a" stroke-width=".7"/></svg></button>
      <button aria-label="Zoom"><svg viewBox="0 0 16 16"><path d="M8 9l5 5" stroke="#5e534a" stroke-width="3"/><circle cx="5.500" cy="6.500" r="4.500" fill="#d4dbd8" stroke="#6e635a"/><path d="M11 3.500h5M13.500 1v5M11 8h5" stroke="#5e534a"/></svg></button>
      <svg class="caret"><use href="#i-caret"/></svg>
      <button aria-label="Orbit"><svg viewBox="0 0 16 16"><ellipse cx="8" cy="8" rx="3" ry="7" fill="none" stroke="#5e534a"/><ellipse cx="8" cy="8" rx="7" ry="3" fill="none" stroke="#5e534a"/><path d="M6 8h4M8 6v4M12 9v4" stroke="#5e534a"/></svg></button>
      <svg class="caret"><use href="#i-caret"/></svg>
      <button aria-label="Look at"><svg viewBox="0 0 16 16"><path d="M.5 5.500h15v9H.5z" fill="#ccc6c0" stroke="#5e534a"/><path d="M3.500 8.500h9v3h-9z" fill="#8a8078" stroke="#5e534a"/><path d="M2 4l5-3v2l6-1" fill="none" stroke="#c4bdb6"/></svg></button>
      <button class="edge" aria-label="Navigation bar options"><svg viewBox="0 0 8 8"><circle cx="4" cy="4" r="4" fill="#55493f"/><path d="M2 3h4M2.500 4.500h3L4 6z" fill="#cfc8c0" stroke="#cfc8c0" stroke-width=".7"/></svg></button>
    </div>
  </section>
</main>
</body>
</html>
```
FILE: styles.css
```css
* { box-sizing: border-box; }

body {
  margin: 0;
  padding-top: 111px;
  min-height: 100vh;
  display: flex;
  flex-direction: column;
  overflow: hidden;
  background: #fff;
  color: #3c3c3c;
  font: 12px/15px Roboto, "Open Sans", sans-serif;
}

button, select, input { font: inherit; color: inherit; }
button { border: 0; padding: 0; background: none; }
h1, h2 { margin: 0; font: inherit; }
svg { display: block; flex: none; width: 16px; height: 16px; }
.defs { position: absolute; width: 0; height: 0; }
.caret { width: 5px; height: 3px; }
.caret-lg { width: 8px; height: 5px; }
.custom { width: 8px; height: 8px; }
.turn { transform: rotate(-90deg); }

/* Title bar and tabs */
.chrome {
  display: grid;
  grid-template-columns: 41px 1fr;
  grid-template-rows: 24px 18px;
  background: #404040;
}
.app-menu {
  grid-row: 1 / 3;
  display: grid;
  grid-template-columns: 32px 8px;
  align-items: center;
  justify-items: center;
  border: 1px solid #1c1c1c;
  background: linear-gradient(#a8a8a8, #747474 45%, #a0a0a0);
  color: #222;
}
.app-menu .caret-lg { width: 7px; }
.app-logo { width: 20px; height: 27px; }
.app-pro { color: #111; font-size: 8px; line-height: 10px; }

.titlebar {
  display: flex;
  min-width: 0;
  background: linear-gradient(90deg, #0a0e12 0, #0a0e12 68%, #42566a 71%, #4b6178 90%, #6d88a4 100%);
}
.qat, .infocenter {
  display: flex;
  align-items: center;
  background: linear-gradient(#868686, #5a5a5a);
  border-top: 1px solid #6c7064;
}
.qat { flex: none; width: 599px; padding-left: 5px; color: #2a2a2a; }
.qat button, .infocenter button {
  display: flex;
  flex: none;
  align-items: center;
  justify-content: center;
  width: 24px;
  height: 20px;
}
.qat .drop { width: 12px; }
.qat .wide { width: 27px; }
.bar-sep { width: 1px; height: 18px; margin: 0 3px; background: #9a9a9a; }
.combo {
  display: flex;
  flex: none;
  align-items: center;
  width: 98px;
  height: 20px;
  padding: 0 2px;
  border: 1px solid #8c8c8c;
  background: linear-gradient(#ececec, #cfcfcf);
  color: #222;
}
.combo select {
  flex: 1;
  min-width: 0;
  padding: 0 0 0 2px;
  border: 0;
  background: none;
  appearance: none;
}
.fx-sm, .fx-big { font-family: "Liberation Serif", serif; }
.qat .fx-sm { font-size: 18px; line-height: 16px; color: #1c1c1c; }
.fx-sm sub, .fx-big sub { font-size: 70%; line-height: 0; }
.fx-big { font-size: 36px; line-height: 30px; height: 32px; color: #3a4250; font-weight: bold; }

.title {
  flex: 1;
  display: flex;
  align-items: center;
  justify-content: center;
  gap: 8px;
  min-width: 0;
  overflow: hidden;
  white-space: nowrap;
  color: #050505;
  background:
    radial-gradient(ellipse 230px 20px at 49% 50%, #7c7c7ccc, #7c7c7c00),
    linear-gradient(90deg, #2a3a46 0, #3b4c5a 6%, #0b0f14 9%, #0b0f14 58%, #505a60 64%, #0f151b 68%, #0b0f14 82%, #41586e 89%, #7d9cba 94%, #3f5872 100%);
}
.infocenter { flex: none; width: 455px; color: #222; }
.infocenter .drop { width: 12px; }
.infocenter input {
  width: 180px;
  height: 21px;
  border: 1px solid #999;
  background: #fff;
}
.infocenter .signin { width: 116px; gap: 4px; justify-content: flex-start; padding-left: 4px; color: #111; }
.signin .caret { margin-left: auto; }
.infocenter .bar-sep { margin: 0 5px; }
.winctl { display: flex; flex: none; align-items: flex-start; width: 147px; padding-left: 41px; }
.winctl button {
  display: flex;
  align-items: center;
  justify-content: center;
  width: 28px;
  height: 19px;
  border: 1px solid #26313b;
  border-top: 0;
  border-left-width: 0;
  background: linear-gradient(#b8c4d0, #8e9dac 48%, #5c6c7c 50%, #8496a6);
}
.winctl button:first-child { border-left-width: 1px; border-radius: 0 0 0 5px; }
.winctl .close { width: 47px; border-radius: 0 0 5px 0; background: linear-gradient(#e0a498, #cd6350 48%, #b3200c 50%, #d04a30); }
.winctl svg, .docctl svg { width: 12px; height: 12px; }

.tabs { display: flex; padding-left: 2px; }
.tabs a {
  padding: 1px 9px 0 10px;
  color: #f0f0f0;
  line-height: 17px;
  text-decoration: none;
  white-space: nowrap;
}
.tabs .active {
  border-radius: 2px 2px 0 0;
  background: linear-gradient(#d4d4d4, #fff);
  color: #333;
}
.minimize { display: flex; align-items: center; gap: 6px; margin-left: 24px; color: #ddd; }
.minimize svg:first-child { width: 14px; height: 8px; }

/* Ribbon */
.ribbon {
  display: flex;
  height: 96px;
  border-bottom: 2px solid #8b8b8b;
  background: linear-gradient(#d6d6d6, #8e8e8e);
}
.panel {
  display: flex;
  flex: none;
  flex-direction: column;
  border-right: 1px solid #a4a4a4;
  background: #fff;
}
.panel h2 {
  height: 18px;
  margin: 0 1px 1px;
  border-top: 1px solid #d8d8d8;
  background: #eee;
  line-height: 17px;
  text-align: center;
}
.tools { display: grid; flex: 1; white-space: nowrap; }
.p-update { width: 164px; }
.p-update .tools { grid-template-columns: 64px 1fr; }
.p-param { width: 70px; }
.p-styles { width: 144px; }
.p-styles .tools { grid-template-columns: 74px 1fr; }
.p-insert { width: 250px; }
.p-insert .tools { grid-template-columns: 43px 1fr 103px; }
.p-cloud { width: 208px; }
.p-cloud .tools { grid-template-columns: 60px 40px 1fr; }
.p-layout { width: 118px; }
.p-layout .tools { grid-template-columns: 42px 72px; }
.p-author { width: 313px; }
.p-author .tools { grid-template-columns: 44px 140px 1fr; }
.p-content { width: 117px; border-right: 0; }
.p-content .tools { padding-left: 4px; }
.big {
  display: flex;
  flex-direction: column;
  align-items: center;
  padding-top: 5px;
}
.big > svg:first-child { width: 32px; height: 32px; margin-bottom: 5px; }
.big .fx-big { margin-bottom: 5px; }
.big .caret { margin-top: 3px; }
.stack { padding: 3px 0 0 3px; }
.stack button {
  display: flex;
  align-items: center;
  gap: 5px;
  height: 24px;
}
.stack .caret { margin-left: 3px; color: #444; }
.tools .off { color: #b4b4b4; }
.off .caret { color: #777; }
.flat { width: 101px; height: 22px; margin-top: 4px; border-color: #d0d0d0; background: #f4f4f4; }
.flat select { padding-left: 1px; }

/* Workspace */
.workspace { display: flex; flex: 1; min-height: 831px; background: #efefef; padding-right: 2px; }
.browser {
  display: flex;
  flex: none;
  flex-direction: column;
  width: 210px;
  padding: 3px 4px 0 3px;
  border-right: 1px solid #777;
  background: #efefef;
  color: #111;
  font-family: "DejaVu Sans Condensed", "DejaVu Sans", sans-serif;
  font-size: 11px;
}
.grip { display: flex; align-items: center; justify-content: space-between; height: 12px; padding-right: 3px; }
.grip span { width: 187px; height: 5px; border: 1px solid #999; border-left: 0; background: #fff; }
.grip svg { width: 7px; height: 7px; }
.browser-head {
  display: flex;
  align-items: center;
  justify-content: space-between;
  height: 21px;
  padding: 0 3px 0 8px;
  background: #ababab;
}
.browser-title { display: flex; align-items: center; gap: 4px; color: #fff; font-weight: bold; font-size: 12px; }
.note svg { width: 14px; height: 15px; }
.browser-tools { display: flex; align-items: center; gap: 7px; height: 26px; padding-left: 3px; }
.browser-tools span { width: 1px; height: 18px; background: #999; }
.browser-tools svg { width: 15px; height: 13px; }
.tree { flex: 1; margin: 0; padding: 1px 0 0; border: 1px solid #666; border-bottom: 0; background: #fff; list-style: none; }
.tree li { display: flex; align-items: center; gap: 2px; height: 18px; white-space: nowrap; }
.tree .root { padding-left: 5px; }
.tree .dim { color: #777; }
.node {
  display: flex;
  align-items: center;
  width: 22px;
  height: 18px;
  padding-left: 4px;
  background:
    linear-gradient(#808080, #808080) 8px 0 / 1px 100% no-repeat,
    linear-gradient(#808080, #808080) 8px 9px / 12px 1px no-repeat;
}
.tree li:last-child .node { background-size: 1px 50%, 12px 1px; }
.node button {
  width: 9px;
  height: 9px;
  border: 1px solid #777;
  background:
    linear-gradient(#000, #000) center / 5px 1px no-repeat,
    linear-gradient(#000, #000) center / 1px 5px no-repeat,
    #fff;
}

.viewport { position: relative; flex: 1; min-width: 0; overflow: hidden; background: #4f3e2d; }
.scene { position: absolute; inset: 0; width: 100%; height: 100%; }
.dims, .axis { font: 12px "DejaVu Sans Condensed", "DejaVu Sans", sans-serif; text-anchor: middle; }
.dims { fill: #e2e0dc; }
.docctl { position: absolute; top: 6px; right: 2px; display: flex; gap: 8px; }
.viewcube {
  position: absolute;
  top: 59px;
  right: 35px;
  display: flex;
  align-items: center;
  justify-content: center;
  width: 54px;
  height: 54px;
  background: linear-gradient(#9a8d82, #85786d);
  box-shadow: 0 4px 6px -2px #2a2018aa;
  color: #5a5048;
  font: bold 12px "Open Sans", sans-serif;
}
.viewcube span { display: flex; justify-content: center; width: 34px; line-height: 34px; background: #84776c; }
.navbar {
  position: absolute;
  top: 145px;
  right: 2px;
  display: flex;
  flex-direction: column;
  align-items: center;
  width: 33px;
  height: 197px;
  padding: 2px;
  border: 1px solid #8d8075;
  border-radius: 4px;
  background: #7b6e63;
  box-shadow: 0 0 3px 1px #2e2218;
  color: #574b41;
}
.navbar button, .navbar .caret { margin-bottom: 8px; }
.navbar .edge { align-self: flex-end; margin: 0 2px 0 0; }
.navbar .edge svg { width: 8px; height: 8px; }
.navbar .nav-wheel { margin: 11px 0 10px; }
.navbar .nav-wheel svg { width: 22px; height: 22px; }
.navbar .nav-wheel + .caret { margin-bottom: 4px; }
.navbar hr { width: 26px; margin: 0 0 6px; border: 0; border-top: 1px solid #574b41; }
.navbar .edge:last-child { margin-top: auto; }
```
